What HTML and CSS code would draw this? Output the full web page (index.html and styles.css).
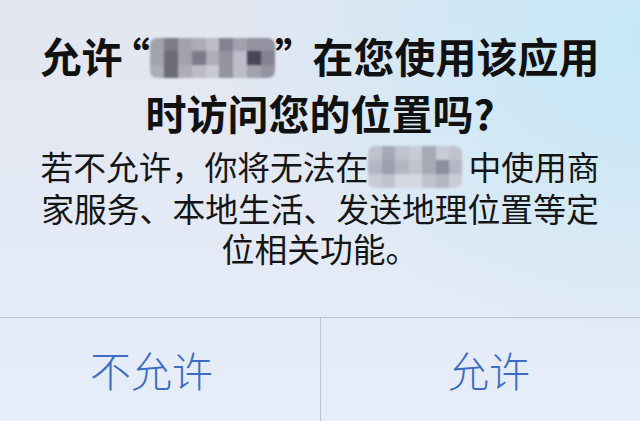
FILE: index.html
```html
<!DOCTYPE html>
<html>
<head>
    <meta charset="utf-8">
    <link rel="stylesheet" href="styles.css">
</head>
<body>
    <div class="alert">
        <div class="alert-body">
            <h1 class="alert-title">
                允许<span class="quote quote-open">“</span><span class="masked masked-title">
                    <i class="s3"></i><i class="s6"></i><i class="s3"></i><i class="s2"></i><i class="s1"></i><i class="s5"></i><i class="s3"></i><i class="s4"></i><i class="s4"></i>
                    <i class="s3"></i><i class="s7"></i><i class="s3"></i><i class="s6"></i><i class="s2"></i><i class="s4"></i><i class="s1"></i><i class="s8"></i><i class="s5"></i>
                    <i class="s2"></i><i class="s7"></i><i class="s2"></i><i class="s1"></i><i class="s0"></i><i class="s4"></i><i class="s1"></i><i class="s3"></i><i class="s4"></i>
                </span><span class="quote quote-close">”</span>在您使用该应用<br>时访问您的位置吗?
            </h1>
            <p class="alert-message">
                若不允许，你将无法在<span class="masked masked-inline">
                    <i class="l2"></i><i class="l4"></i><i class="l2"></i><i class="l1"></i><i class="l4"></i><i class="l1"></i><i class="l2"></i>
                    <i class="l3"></i><i class="l5"></i><i class="l3"></i><i class="l2"></i><i class="l4"></i><i class="l6"></i><i class="l3"></i>
                    <i class="l1"></i><i class="l2"></i><i class="l0"></i><i class="l0"></i><i class="l2"></i><i class="l3"></i><i class="l1"></i>
                </span>中使用商<br>家服务、本地生活、发送地理位置等定<br>位相关功能。
            </p>
        </div>
        <div class="alert-actions">
            <button class="action action-cancel">不允许</button>
            <button class="action action-ok">允许</button>
        </div>
    </div>
</body>
</html>
```

FILE: styles.css
```css
body {
    margin: 0;
    font-family: "Noto Sans CJK SC", "Noto Sans", sans-serif;
}

.alert {
    height: 421px;
    display: flex;
    flex-direction: column;
    background:
        radial-gradient(ellipse 420px 320px at 650px 40px, rgba(194, 232, 248, 0.95), rgba(194, 232, 248, 0) 100%),
        linear-gradient(180deg, #e2e6f1 0%, #e4eaf5 55%, #e5edf8 100%);
}

.alert-body {
    flex: 1;
    padding-top: 27px;
    text-align: center;
}

.alert-title {
    margin: 0;
    font-size: 41px;
    line-height: 57px;
    font-weight: 700;
    color: #111;
}

/* half-width quote marks, spaced out around the hidden name */
.quote {
    font-feature-settings: "halt";
}

.quote-open {
    margin-left: 7px;
}

.quote-close {
    margin-right: 17px;
}

.alert-message {
    margin: 5px 0 0;
    font-size: 32.8px;
    line-height: 40px;
    color: #151515;
}

/* pixelated placeholder where the app name was hidden */
.masked {
    display: inline-block;
    overflow: hidden;
    font-size: 0;
    line-height: 0;
    border-radius: 7px;
    filter: blur(0.8px);
}

.masked i {
    display: inline-block;
    height: 33.34%;
}

.masked-title {
    width: 125px;
    height: 40px;
    vertical-align: -5px;
}

.masked-title i {
    width: 11.111%;
}

.masked-inline {
    width: 94px;
    height: 42px;
    margin-right: 6px;
    vertical-align: -8px;
}

.masked-inline i {
    width: 14.285%;
}

.s0 { background: #c9c9d2; }
.s1 { background: #bdbdc8; }
.s2 { background: #adadb9; }
.s3 { background: #a2a2ae; }
.s4 { background: #9393a2; }
.s5 { background: #828292; }
.s6 { background: #7b7b8a; }
.s7 { background: #6b6b7a; }
.s8 { background: #474757; }

.l0 { background: #d4d8e1; }
.l1 { background: #c8ccd6; }
.l2 { background: #bfc3ce; }
.l3 { background: #b3b7c3; }
.l4 { background: #a6aab7; }
.l5 { background: #9ca0ad; }
.l6 { background: #8b909e; }

.alert-actions {
    display: grid;
    grid-template-columns: 1fr 1fr;
    height: 103px;
    border-top: 1px solid #b9c4d4;
}

.action {
    border: none;
    background: transparent;
    font-family: inherit;
    font-size: 41px;
    font-weight: 300;
    color: #3d6dc2;
    padding: 0 0 2px;
}

.action-cancel {
    padding-right: 17px;
}

.action-ok {
    padding-left: 17px;
    border-left: 1px solid #bac4d3;
}
```
